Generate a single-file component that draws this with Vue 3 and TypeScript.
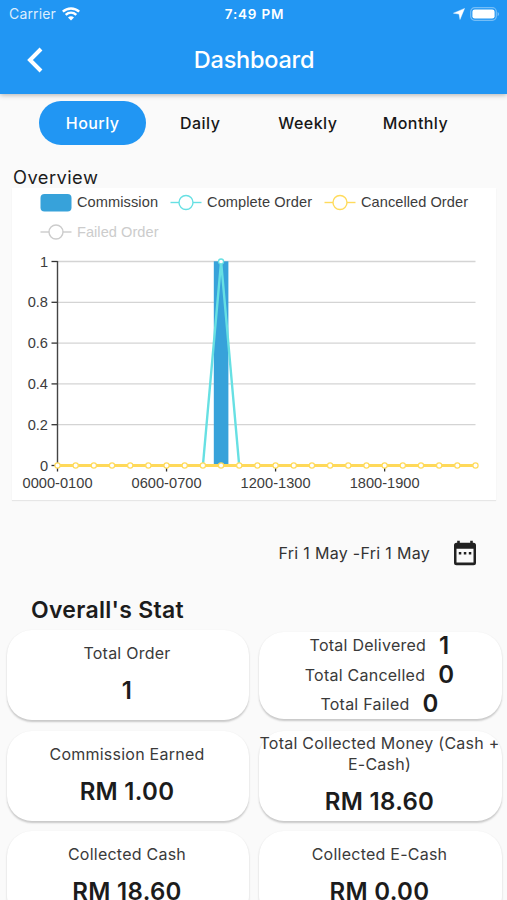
<script setup lang="ts">
interface Stat {
  label: string
  value: string
}

const tabs: string[] = ['Hourly', 'Daily', 'Weekly', 'Monthly']

const left = 57.5
const bottom = 465.5
const stepX = 418 / 23
const stepY = 40.8

const yTicks = ['0', '0.2', '0.4', '0.6', '0.8', '1'].map((label, i) => ({
  label,
  y: bottom - i * stepY,
}))
const xTicks = ['0000-0100', '0600-0700', '1200-1300', '1800-1900'].map((label, i) => ({
  label,
  x: left + i * 6 * stepX,
}))
const hours = Array.from({ length: 24 }, (_, i) => left + i * stepX)
const completePoints = hours
  .map((x, i) => `${x.toFixed(1)},${i === 9 ? 261.5 : bottom}`)
  .join(' ')

const breakdown: Stat[] = [
  { label: 'Total Delivered', value: '1' },
  { label: 'Total Cancelled', value: '0' },
  { label: 'Total Failed', value: '0' },
]
const stats: Stat[] = [
  { label: 'Commission Earned', value: 'RM 1.00' },
  { label: 'Total Collected Money (Cash + E-Cash)', value: 'RM 18.60' },
  { label: 'Collected Cash', value: 'RM 18.60' },
  { label: 'Collected E-Cash', value: 'RM 0.00' },
]
</script>

<template>
  <div class="screen">
    <header class="header">
      <div class="status">
        <div class="carrier">
          <span>Carrier</span>
          <svg width="18" height="14" viewBox="0 0 18 14" fill="none" stroke="#fff" stroke-width="2.5">
            <path d="M.8 4.6C5.4.3 12.6.3 17.2 4.600" />
            <path d="M3.7 7.900C6.800 5.100 11.200 5.100 14.300 7.900" />
            <path d="M6 10.4c1.8-1.500 4.200-1.500 6 0L9 13.600z" fill="#fff" stroke="none" />
          </svg>
        </div>
        <div class="clock">7:49 PM</div>
        <div class="indicators">
          <svg width="12" height="12" viewBox="0 0 12 12"><path d="M11.600.4 7 11.500 6 6.100.4 5.200z" fill="#fff" stroke="#fff" stroke-width=".4" /></svg>
          <svg width="30" height="14" viewBox="0 0 30 14">
            <rect x=".7" y=".7" width="25.600" height="12.600" rx="4" fill="none" stroke="#fff" stroke-opacity=".38" stroke-width="1.2" />
            <rect x="2.4" y="2.4" width="22.200" height="9.200" rx="2.4" fill="#fff" />
            <path d="M27.600 4.700q2.900 2.300 0 4.600z" fill="#fff" fill-opacity=".4" />
          </svg>
        </div>
      </div>
      <div class="titlebar">
        <svg class="back" width="16" height="26" viewBox="0 0 16 26" fill="none" stroke="#fff" stroke-width="4"><path d="M14 2 3 13l11 11" /></svg>
        <h1>Dashboard</h1>
      </div>
    </header>

    <nav class="tabs">
      <button v-for="(tab, i) in tabs" :key="tab" class="tab" :class="{ active: i === 0 }">{{ tab }}</button>
    </nav>

    <h2 class="overview">Overview</h2>
    <div class="chart">
      <svg width="484" height="312" viewBox="12 188 484 312">
        <g class="legend">
          <rect x="40.5" y="194" width="31" height="17.5" rx="4" fill="#37a2da" />
          <text x="77" y="207.4" textLength="81">Commission</text>
          <g fill="#fff" stroke="#67e0e3" stroke-width="1.4">
            <path d="M170.5 202.5h31" /><circle cx="186" cy="202.5" r="7" />
          </g>
          <text x="207" y="207.4" textLength="105">Complete Order</text>
          <g fill="#fff" stroke="#ffdb5c" stroke-width="1.4">
            <path d="M324.5 202.5h31" /><circle cx="340" cy="202.5" r="7" />
          </g>
          <text x="361" y="207.4" textLength="107">Cancelled Order</text>
          <g fill="#fff" stroke="#ccc" stroke-width="1.4">
            <path d="M40.5 232h31" /><circle cx="56" cy="232" r="7" />
          </g>
          <text x="77" y="236.9" textLength="81.5" class="disabled">Failed Order</text>
        </g>

        <g v-for="t in yTicks" :key="t.label">
          <path :d="`M57.5 ${t.y}H475.5`" stroke="#d4d4d4" stroke-width="1.3" />
          <path :d="`M51.5 ${t.y}h6`" stroke="#333" stroke-width="1.3" />
          <text x="48" :y="t.y + 5" text-anchor="end">{{ t.label }}</text>
        </g>
        <path d="M57.5 261V466" stroke="#444" stroke-width="1.4" />
        <g v-for="t in xTicks" :key="t.label">
          <path :d="`M${t.x} 465.5v6`" stroke="#333" stroke-width="1.3" />
          <text :x="t.x - 35" y="488" textLength="70">{{ t.label }}</text>
        </g>

        <rect x="213.8" y="261.3" width="14.6" height="204.2" fill="#37a2da" />
        <polyline :points="completePoints" fill="none" stroke="#67e0e3" stroke-width="2.4" stroke-linejoin="bevel" />
        <circle :cx="hours[9]" cy="261.5" r="2.5" fill="#fff" stroke="#67e0e3" stroke-width="1.3" />
        <path d="M57.5 465.5h418" stroke="#ffd95a" stroke-width="3" />
        <circle v-for="x in hours" :key="x" :cx="x" cy="465.5" r="2.6" fill="#fff" stroke="#ffdb5c" stroke-width="1.2" />
      </svg>
    </div>

    <div class="range">
      <span>Fri 1 May -Fri 1 May</span>
      <svg width="24" height="26" viewBox="0 0 24 26">
        <path d="M4.2.8h2.6v2h10.4v-2h2.6v2h.7q2.5 0 2.5 2.5v17.4q0 2.5-2.5 2.5h-17Q1 25.2 1 22.7V5.3q0-2.5 2.5-2.5h.7zM3.5 8.8v13.8h17V8.8z" fill="#212121" fill-rule="evenodd" />
        <path d="M5.8 12h2.5v2.5H5.8zM10.8 12h2.5v2.5h-2.5zM15.8 12h2.5v2.5h-2.5z" fill="#212121" />
      </svg>
    </div>

    <h2 class="overall">Overall's Stat</h2>
    <section class="grid">
      <article class="card">
        <span class="label">Total Order</span>
        <strong>1</strong>
      </article>
      <article class="card breakdown">
        <div v-for="s in breakdown" :key="s.label" class="line">
          <span class="label">{{ s.label }}</span><strong>{{ s.value }}</strong>
        </div>
      </article>
      <article v-for="s in stats" :key="s.label" class="card">
        <span class="label">{{ s.label }}</span>
        <strong>{{ s.value }}</strong>
      </article>
    </section>
  </div>
</template>

<style>
body {
  background: #fafafa;
  overflow: hidden;
}
</style>

<style scoped>
.screen {
  width: 507px;
  height: 900px;
  overflow: hidden;
  background: #fafafa;
  color: #1c1c1c;
  font-family: Inter, "Liberation Sans", sans-serif;
}
.header {
  height: 94px;
  background: #2196f3;
  color: #fff;
  box-shadow: 0 1px 5px rgba(0, 0, 0, 0.3);
}
.status {
  display: grid;
  grid-template-columns: 1fr auto 1fr;
  align-items: center;
  height: 27px;
  padding: 0 7px 0 9px;
  font-size: 14px;
}
.carrier {
  display: flex;
  align-items: center;
  gap: 6px;
  letter-spacing: 0.15px;
  color: rgba(255, 255, 255, 0.85);
}
.clock {
  font-weight: 600;
  font-size: 13.5px;
  letter-spacing: 0.8px;
}
.indicators {
  display: flex;
  align-items: center;
  justify-content: flex-end;
  gap: 5px;
}
.titlebar {
  display: grid;
  grid-template-columns: 28px 1fr 28px;
  align-items: center;
  height: 65px;
  padding: 0 26px 0 27px;
}
h1,
h2 {
  margin: 0;
}
h1 {
  font-size: 23.5px;
  font-weight: 500;
  text-align: center;
  letter-spacing: -0.25px;
}
.tabs {
  display: grid;
  grid-template-columns: repeat(4, 107.6px);
  justify-content: center;
  height: 44px;
  margin-top: 7px;
  padding-left: 1px;
}
.tab {
  padding: 0;
  border: 0;
  border-radius: 22px;
  background: none;
  color: #171717;
  font: 500 16px Inter, sans-serif;
  letter-spacing: 0.45px;
}
.tab.active {
  background: #2196f3;
  color: #fff;
}
.overview {
  height: 23px;
  margin: 20px 0 0 13px;
  font-size: 18.3px;
  line-height: 24px;
  font-weight: 400;
  letter-spacing: 0.45px;
}
.chart {
  width: 484px;
  height: 312px;
  margin-left: 12px;
  background: #fff;
  box-shadow: 0 1px 1px rgba(0, 0, 0, 0.08);
}
.chart svg {
  display: block;
}
.chart text {
  font-family: "Liberation Sans", Arial, sans-serif;
  font-size: 14.6px;
  fill: #3c3c3c;
}
.chart text.disabled {
  fill: #ccc;
}
.range {
  display: flex;
  align-items: center;
  justify-content: flex-end;
  gap: 23px;
  height: 28px;
  margin-top: 39px;
  padding-right: 30px;
  font-size: 16px;
  letter-spacing: 0.3px;
  color: #333;
}
.overall {
  height: 30px;
  margin: 28px 0 0 31px;
  font-size: 23px;
  line-height: 30px;
  font-weight: 600;
  letter-spacing: 0.3px;
}
.grid {
  display: grid;
  grid-template-columns: 242px 243px;
  grid-auto-rows: 90px;
  gap: 10.5px 10px;
  margin: 5px 0 0 7px;
}
.card {
  display: flex;
  flex-direction: column;
  align-items: center;
  justify-content: center;
  gap: 12px;
  border-radius: 25px;
  background: #fff;
  box-shadow: 0 1.5px 2px rgba(0, 0, 0, 0.2);
  text-align: center;
}
.label {
  color: #3a3a3a;
  font-size: 16px;
  line-height: 21px;
  letter-spacing: 0.24px;
}
.card > .label {
  margin-top: -1px;
  margin-right: 2px;
}
.card strong {
  font-size: 24px;
  line-height: 30px;
  font-weight: 600;
  letter-spacing: 0.15px;
}
.card > strong {
  margin-right: 2px;
  letter-spacing: 0.3px;
}
.card.breakdown {
  gap: 0;
  height: 87px;
  margin-top: 1.5px;
}
.line {
  display: flex;
  align-items: center;
  gap: 13px;
  height: 29.3px;
}
.breakdown .line {
  margin-right: 2px;
}
</style>
